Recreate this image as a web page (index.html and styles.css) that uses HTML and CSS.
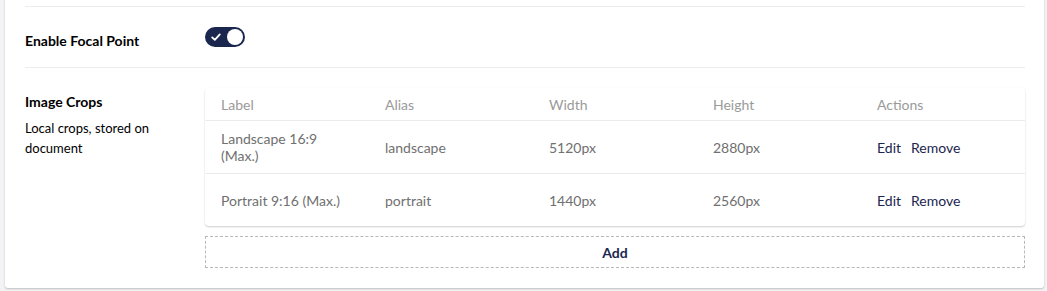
FILE: index.html
```html
<!DOCTYPE html>
<html lang="en">
<head>
<meta charset="utf-8">
<title>Image Cropper settings</title>
<link rel="stylesheet" href="styles.css">
</head>
<body>
<div class="page">
  <div class="card">
    <div class="prop prev"></div>
    <div class="prop">
      <div class="prop-label">
        <div class="prop-title">Enable Focal Point</div>
      </div>
      <div class="prop-editor">
        <span class="toggle" role="switch" aria-checked="true">
          <svg class="check" viewBox="0 0 12 12" width="12" height="12"><path d="M2.2 6.4 L4.8 8.9 L9.8 3.4" fill="none" stroke="#fff" stroke-width="1.8" stroke-linecap="round" stroke-linejoin="round"/></svg>
          <span class="knob"></span>
        </span>
      </div>
    </div>
    <div class="prop last">
      <div class="prop-label">
        <div class="prop-title">Image Crops</div>
        <div class="prop-desc">Local crops, stored on document</div>
      </div>
      <div class="prop-editor">
        <div class="table">
          <div class="tr head">
            <div class="td">Label</div>
            <div class="td">Alias</div>
            <div class="td">Width</div>
            <div class="td">Height</div>
            <div class="td">Actions</div>
          </div>
          <div class="tr">
            <div class="td">Landscape 16:9 (Max.)</div>
            <div class="td">landscape</div>
            <div class="td">5120px</div>
            <div class="td">2880px</div>
            <div class="td actions"><span class="act">Edit</span><span class="act">Remove</span></div>
          </div>
          <div class="tr">
            <div class="td">Portrait 9:16 (Max.)</div>
            <div class="td">portrait</div>
            <div class="td">1440px</div>
            <div class="td">2560px</div>
            <div class="td actions"><span class="act">Edit</span><span class="act">Remove</span></div>
          </div>
        </div>
        <div class="add">Add</div>
      </div>
    </div>
  </div>
</div>
</body>
</html>
```
FILE: styles.css
```css
html, body {
  margin: 0;
  padding: 0;
  background: #f3f3f5;
  font-family: Lato, "Open Sans", sans-serif;
  color: #1b264f;
}
.page {
  padding: 0 3px 0 5px;
  overflow: hidden;
  height: 291px;
}
.card {
  background: #fff;
  margin-top: -54px;
  padding: 0 19px 0 20px;
  border-radius: 3px;
  box-shadow: 0 1px 2px rgba(0, 0, 0, 0.22);
}
.prop {
  display: grid;
  grid-template-columns: 180px 1fr;
  align-items: start;
  padding: 20px 0;
  border-bottom: 1px solid #ececee;
}
.prop.prev {
  height: 20px;
}
.prop.last {
  border-bottom: none;
}
.prop-label {
  margin-bottom: -4px;
}
.prop-title {
  font-weight: 700;
  font-size: 14px;
  line-height: 20px;
  padding-top: 4px;
  color: #000;
}
.prop-desc {
  font-size: 13px;
  line-height: 20px;
  margin-top: 6px;
  color: #000;
  width: 150px;
}
.toggle {
  display: flex;
  align-items: center;
  justify-content: space-between;
  width: 40px;
  height: 20px;
  box-sizing: border-box;
  padding: 0 2px 0 5px;
  border-radius: 10px;
  background: #1b264f;
}
.check {
  display: block;
}
.knob {
  width: 16px;
  height: 16px;
  border-radius: 50%;
  background: #fff;
}
.table {
  background: #fff;
  border-radius: 4px;
  box-shadow: 0 1px 2px rgba(0, 0, 0, 0.2);
}
.tr {
  display: grid;
  grid-template-columns: repeat(5, 1fr);
  min-height: 52px;
  align-items: center;
  border-top: 1px solid #ececee;
}
.tr.head {
  min-height: 32px;
  border-top: none;
}
.td {
  padding: 0 16px;
  font-size: 14px;
  line-height: 17px;
  color: #707070;
}
.head .td {
  color: #9a9a9a;
}
.actions {
  display: flex;
  gap: 10px;
}
.act {
  color: #1b264f;
}
.add {
  margin-top: 10px;
  height: 32px;
  box-sizing: border-box;
  border: 1px dashed #b8b8b8;
  display: flex;
  align-items: center;
  justify-content: center;
  font-weight: 700;
  font-size: 14px;
  color: #1b264f;
}
```
